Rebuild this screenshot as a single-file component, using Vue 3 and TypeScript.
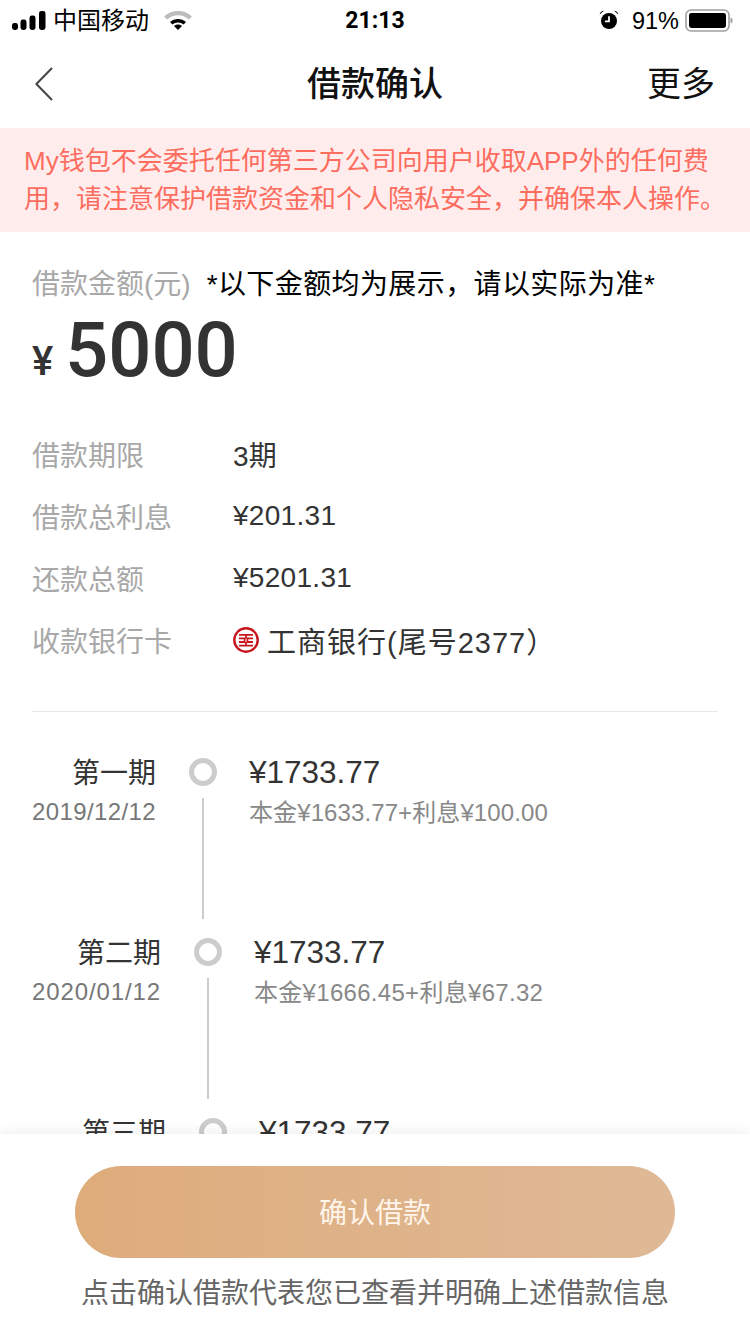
<script setup lang="ts">
const details = [
  { label: '借款期限', value: '3期' },
  { label: '借款总利息', value: '¥201.31' },
  { label: '还款总额', value: '¥5201.31' },
]
const plans = [
  { name: '第一期', date: '2019/12/12', amount: '¥1733.77', detail: '本金¥1633.77+利息¥100.00', width: 124, tracking: 0.1 },
  { name: '第二期', date: '2020/01/12', amount: '¥1733.77', detail: '本金¥1666.45+利息¥67.32', width: 129, tracking: 0.3 },
  { name: '第三期', date: '2020/02/12', amount: '¥1733.77', detail: '本金¥1699.77+利息¥34.00', width: 134, tracking: 0.3 },
]
const dateSpacing = (width: number): string => `${(width - 120) / 10}px`
</script>

<template>
  <div class="page">
    <div class="status">
      <div class="status-left">
        <svg class="signal" width="34" height="19" viewBox="0 0 34 19">
          <rect x="0" y="12" width="6" height="7" rx="2.4" fill="#000" />
          <rect x="8.5" y="8.5" width="6" height="10.5" rx="2.4" fill="#000" />
          <rect x="17.5" y="4.5" width="6" height="14.5" rx="2.4" fill="#000" />
          <rect x="27" y="0" width="6.5" height="19" rx="2.4" fill="#000" />
        </svg>
        <span class="carrier">中国移动</span>
        <svg class="wifi" width="30" height="20" viewBox="0 0 30 20">
          <path d="M1 6.5C9 -0.8 21 -0.8 29 6.5L26 9.6C19.5 3.8 10.5 3.8 4 9.6Z" fill="#bdbdbd" />
          <path d="M7 12C11.5 8 18.5 8 23 12L20.6 14.6C17.4 11.9 12.6 11.9 9.4 14.6Z" fill="#000" />
          <path d="M11 16C13.4 14 16.6 14 19 16L15 20Z" fill="#000" />
        </svg>
      </div>
      <span class="time">21:13</span>
      <div class="status-right">
        <svg class="alarm" width="20" height="20" viewBox="0 0 20 20">
          <circle cx="10" cy="11" r="8" fill="#000" />
          <path d="M10 6.2V11.4H6" fill="none" stroke="#fff" stroke-width="1.8" />
          <path d="M0.6 4.6C1.2 2 3 0.8 5 0.8Z M19.4 4.6C18.8 2 17 0.8 15 0.8Z" fill="#000" />
        </svg>
        <span class="percent">91%</span>
        <svg class="battery" width="48" height="24" viewBox="0 0 48 24">
          <rect x="1" y="1" width="43" height="21" rx="5" fill="none" stroke="#a0a0a0" stroke-width="1.6" />
          <rect x="4" y="4" width="37" height="15" rx="2.4" fill="#000" />
          <path d="M45.5 8.5C47 9 47.6 10 47.6 11.5S47 14 45.5 14.5Z" fill="#a0a0a0" />
        </svg>
      </div>
    </div>

    <div class="nav">
      <svg class="back" width="18" height="34" viewBox="0 0 18 34">
        <path d="M17 1L1.4 17L17 33" fill="none" stroke="#444" stroke-width="2" />
      </svg>
      <span class="title">借款确认</span>
      <span class="more">更多</span>
    </div>

    <div class="notice">
      <div>My钱包不会委托任何第三方公司向用户收取APP外的任何费</div>
      <div>用，请注意保护借款资金和个人隐私安全，并确保本人操作。</div>
    </div>

    <div class="summary">
      <div class="amount-head">
        <span class="muted">借款金额(元)</span>
        <span class="hint">*以下金额均为展示，请以实际为准*</span>
      </div>
      <div class="amount">
        <span class="yen">¥</span>
        <span class="sum">5000</span>
      </div>
      <div class="rows">
        <div v-for="d in details" :key="d.label" class="row">
          <span class="muted row-label">{{ d.label }}</span>
          <span class="row-value">{{ d.value }}</span>
        </div>
        <div class="row">
          <span class="muted row-label">收款银行卡</span>
          <span class="row-value bank">
            <svg width="26" height="26" viewBox="0 0 26 26">
              <circle cx="13" cy="13" r="11.7" fill="none" stroke="#c8161d" stroke-width="2.4" />
              <path d="M6 7.8H20M6 18.6H20M6 11.4H11.6V15H6M20 11.4H14.4V15H20M13 7.8V11.4M13 15V18.6" fill="none" stroke="#c8161d" stroke-width="1.8" />
            </svg>
            <span class="bank-name">工商银行(尾号2377）</span>
          </span>
        </div>
      </div>
    </div>

    <div class="divider"></div>

    <div class="plans">
      <div v-for="p in plans" :key="p.name" class="plan">
        <div class="plan-left" :style="{ width: p.width + 'px' }">
          <div class="plan-name">{{ p.name }}</div>
          <div class="plan-date" :style="{ letterSpacing: dateSpacing(p.width) }">{{ p.date }}</div>
        </div>
        <div class="plan-axis">
          <div class="dot"></div>
          <div class="line"></div>
        </div>
        <div class="plan-right">
          <div class="plan-amount">{{ p.amount }}</div>
          <div class="plan-detail" :style="{ letterSpacing: p.tracking + 'px' }">{{ p.detail }}</div>
        </div>
      </div>
    </div>

    <div class="footer">
      <div class="confirm">确认借款</div>
      <div class="agree">点击确认借款代表您已查看并明确上述借款信息</div>
    </div>
  </div>
</template>

<style scoped>
.page {
  position: relative;
  width: 750px;
  height: 1334px;
  overflow: hidden;
  background: #fff;
  font-family: "Liberation Sans", "Noto Sans CJK SC", sans-serif;
  color: #333;
}
.status {
  height: 40px;
  padding: 0 17px 0 12px;
  display: flex;
  align-items: center;
  justify-content: space-between;
  color: #000;
}
.status-left,
.status-right {
  display: flex;
  align-items: center;
}
.status-left {
  width: 245px;
}
.status-right {
  width: 240px;
  justify-content: flex-end;
}
.carrier {
  margin-left: 7px;
  padding-top: 2px;
  font-size: 24px;
  line-height: 30px;
}
.wifi {
  margin-left: 14px;
}
.time {
  padding-top: 2px;
  font-family: Roboto, "Liberation Sans", sans-serif;
  font-size: 23px;
  font-weight: 700;
  line-height: 30px;
}
.percent {
  margin-left: 13px;
  padding-top: 2px;
  font-size: 23.5px;
  line-height: 30px;
}
.battery {
  margin-left: 6px;
  margin-top: 2px;
}
.nav {
  height: 88px;
  padding: 0 35px;
  display: grid;
  grid-template-columns: 1fr auto 1fr;
  align-items: center;
  color: #111;
}
.back {
  justify-self: start;
}
.title {
  font-size: 34px;
  font-weight: 500;
  line-height: 44px;
}
.more {
  justify-self: end;
  font-size: 34px;
  line-height: 44px;
}
.notice {
  height: 104px;
  padding: 14px 0 0 24px;
  box-sizing: border-box;
  background: #ffeded;
  color: #fd6d5f;
  font-size: 26px;
  line-height: 38px;
  white-space: nowrap;
}
.summary {
  padding: 34px 32px 0;
}
.amount-head {
  display: flex;
  gap: 16px;
  font-size: 28px;
  line-height: 38px;
}
.muted {
  color: #a8a8a8;
}
.hint {
  color: #000;
  letter-spacing: 0.4px;
}
.amount {
  margin-top: 2px;
  height: 92px;
  display: flex;
  align-items: flex-end;
  font-family: Roboto, "Liberation Sans", sans-serif;
  font-weight: 500;
  color: #333;
}
.yen {
  width: 33px;
  font-size: 40px;
  line-height: 40px;
  padding-bottom: 16px;
}
.sum {
  padding-bottom: 4px;
  font-size: 76px;
  line-height: 88px;
}
.rows {
  margin-top: 35px;
  display: flex;
  flex-direction: column;
  gap: 20px;
}
.row {
  height: 42px;
  display: flex;
  align-items: center;
  font-size: 28px;
}
.row-label {
  width: 201px;
}
.row-value {
  display: flex;
  align-items: center;
  gap: 8px;
  letter-spacing: 0.3px;
}
.bank {
  font-size: 29px;
}
.bank-name {
  letter-spacing: 1px;
}
.divider {
  margin: 50px 32px 0;
  height: 1px;
  background: #e6e6e6;
}
.plans {
  padding: 44px 0 0 32px;
}
.plan {
  height: 180px;
  display: flex;
}
.plan-left {
  flex: none;
  text-align: right;
}
.plan-name {
  margin-top: 1px;
  font-size: 28px;
  line-height: 34px;
}
.plan-date {
  margin-top: 5px;
  font-size: 24px;
  line-height: 32px;
  color: #777;
  white-space: nowrap;
}
.plan-axis {
  flex: none;
  width: 28px;
  margin: 2px 32px 0 33px;
  display: flex;
  flex-direction: column;
  align-items: center;
}
.dot {
  width: 28px;
  height: 28px;
  box-sizing: border-box;
  border: 5px solid #ccc;
  border-radius: 50%;
}
.line {
  margin-top: 12px;
  width: 2px;
  height: 121px;
  background: #ccc;
}
.plan-amount {
  font-size: 31.5px;
  line-height: 32px;
}
.plan-detail {
  margin-top: 8px;
  font-size: 24px;
  line-height: 34px;
  color: #888;
  white-space: nowrap;
}
.footer {
  position: absolute;
  left: 0;
  right: 0;
  bottom: 0;
  height: 200px;
  padding-top: 32px;
  box-sizing: border-box;
  background: #fff;
  box-shadow: 0 -4px 10px rgba(0, 0, 0, 0.05);
  display: flex;
  flex-direction: column;
  align-items: center;
}
.confirm {
  width: 600px;
  height: 92px;
  border-radius: 46px;
  background: linear-gradient(90deg, #deac7b, #dfb997);
  color: #fff5ea;
  font-size: 28px;
  line-height: 96px;
  text-align: center;
}
.agree {
  margin-top: 16px;
  font-size: 28px;
  line-height: 40px;
  color: #666;
  white-space: nowrap;
}
</style>
